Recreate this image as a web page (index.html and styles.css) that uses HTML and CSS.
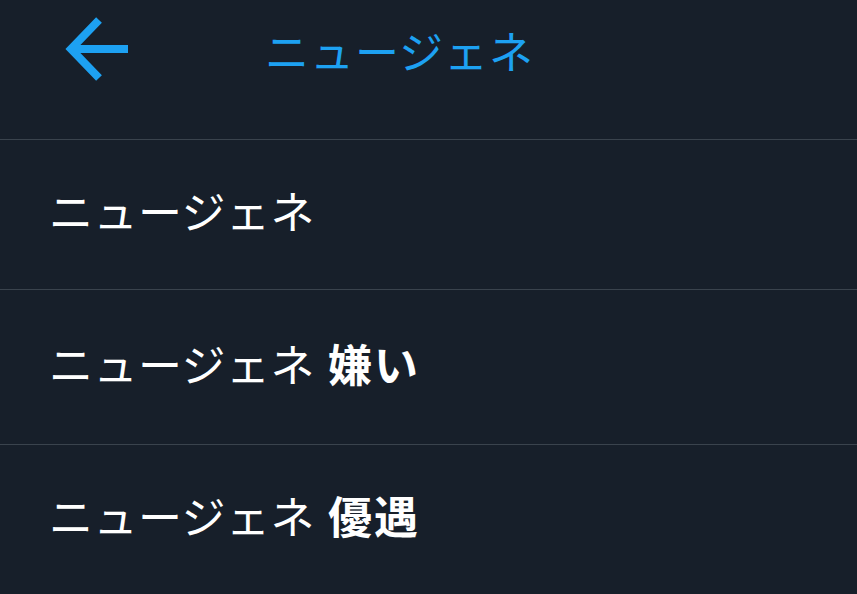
FILE: index.html
```html
<!DOCTYPE html>
<html lang="ja">
<head>
<meta charset="utf-8">
<link rel="stylesheet" href="styles.css">
</head>
<body>
<div class="page">
  <header class="header">
    <svg class="back" width="70" height="70" viewBox="0 0 70 70" aria-hidden="true">
      <path d="M38 5 L10 34 L38 63" fill="none" stroke="#1da1f2" stroke-width="8" stroke-linecap="butt" stroke-linejoin="miter"/>
      <path d="M9 34 H67" fill="none" stroke="#1da1f2" stroke-width="8"/>
    </svg>
    <div class="title">ニュージェネ</div>
  </header>
  <div class="row row1"><span class="text"><span class="q">ニュージェネ</span></span></div>
  <div class="row row2"><span class="text"><span class="q">ニュージェネ</span> <b>嫌い</b></span></div>
  <div class="row row3"><span class="text"><span class="q">ニュージェネ</span> <b>優遇</b></span></div>
</div>
</body>
</html>
```
FILE: styles.css
```css
html, body {
  margin: 0;
  padding: 0;
  background: #171f2a;
}
body {
  font-family: "Noto Sans CJK JP", "Noto Sans", sans-serif;
  overflow: hidden;
}
.page {
  width: 857px;
  height: 594px;
  display: flex;
  flex-direction: column;
  background: #171f2a;
}
.header {
  height: 139px;
  border-bottom: 1px solid #3a434d;
  display: flex;
  align-items: flex-start;
  padding-left: 61px;
  box-sizing: content-box;
}
.back {
  margin-top: 15px;
  flex: none;
}
.title {
  margin-left: 134px;
  margin-top: 18px;
  font-size: 44px;
  line-height: 64px;
  color: #1da1f2;
  letter-spacing: 1px;
}
.row {
  display: flex;
  align-items: center;
  padding-left: 49px;
  padding-bottom: 8px;
  box-sizing: border-box;
  color: #ffffff;
  font-size: 44px;
  border-bottom: 1px solid #3a434d;
}
.text {
  white-space: pre;
  line-height: 1.2;
}
.row b {
  font-weight: 700;
  letter-spacing: 2px;
  margin-left: 3px;
}
.row1 { height: 150px; }
.row2 { height: 155px; }
.row3 { flex: 1; border-bottom: none; }
.q { letter-spacing: 0.5px; }
```
